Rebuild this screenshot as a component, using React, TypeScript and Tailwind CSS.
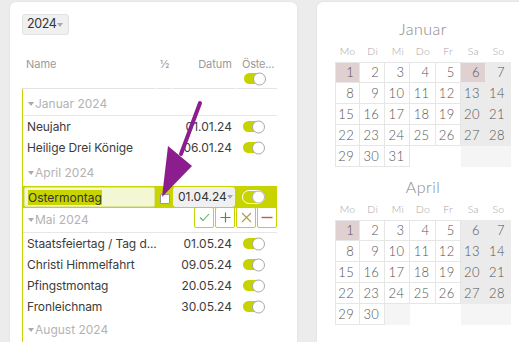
import React from 'react';

type Holiday = { name: string; date: string };

const january: Holiday[] = [
  { name: 'Neujahr', date: '01.01.24' },
  { name: 'Heilige Drei Könige', date: '06.01.24' },
];

const may: Holiday[] = [
  { name: 'Staatsfeiertag / Tag d...', date: '01.05.24' },
  { name: 'Christi Himmelfahrt', date: '09.05.24' },
  { name: 'Pfingstmontag', date: '20.05.24' },
  { name: 'Fronleichnam', date: '30.05.24' },
];

function Caret({ className = '' }: { className?: string }) {
  return (
    <span
      className={`inline-block h-0 w-0 border-x-[3.5px] border-t-[4px] border-x-transparent border-t-[#aaaaaa] ${className}`}
    />
  );
}

function Toggle() {
  return (
    <div className="relative h-[11px] w-[21px] rounded-full bg-[#c6d300]">
      <div className="absolute -right-px top-1/2 h-[13px] w-[13px] -translate-y-1/2 rounded-full border-[1.5px] border-[#a8a8a8] bg-white" />
    </div>
  );
}

function GroupRow({ label, className }: { label: string; className: string }) {
  return (
    <div className={`flex items-end pl-[5px] text-[12px] leading-[16px] text-[#b3b3b3] ${className}`}>
      <Caret className="mb-[6px] mr-[1px]" />
      <span>{label}</span>
    </div>
  );
}

function Row({ item }: { item: Holiday }) {
  return (
    <div className="grid h-[21px] grid-cols-[134px_15px_65px_40px] items-center text-[12px] text-[#3c3c3c]">
      <div className="whitespace-nowrap pl-[4px] tracking-[-0.1px]">{item.name}</div>
      <div />
      <div className="pr-[5px] text-right">{item.date}</div>
      <div className="pl-[6px]">
        <Toggle />
      </div>
    </div>
  );
}

function EditRow() {
  return (
    <div className="relative h-[22px] bg-[#c8d400]">
      <div className="grid h-full grid-cols-[134px_15px_65px_40px] items-center">
        <div className="pl-[1px]">
          <div className="flex h-[20px] w-[131px] items-center rounded-[2px] border border-[#dfe69a] bg-[#f4f7d3] pl-[3px] text-[12px] text-[#333333]">
            <span className="bg-[#c8d400] leading-[15px]">Ostermontag</span>
          </div>
        </div>
        <div className="flex justify-center pl-[1px] pt-[3px]">
          <div className="h-[10px] w-[10px] rounded-[1px] border border-[#999999] bg-white" />
        </div>
        <div className="pl-[1px]">
          <div className="flex h-[20px] w-[62px] items-center justify-between rounded-[3px] bg-[#f0f0f0] pl-[5px] pr-[4px] text-[12px] text-[#333333]">
            <span>01.04.24</span>
            <Caret />
          </div>
        </div>
        <div className="pl-[5px]">
          <div className="relative h-[14px] w-[23px] rounded-full border-[1.5px] border-white bg-[#c8d400]">
            <div className="absolute -right-[1px] top-1/2 h-[13px] w-[13px] -translate-y-1/2 rounded-full border border-[#b5b5b5] bg-white" />
          </div>
        </div>
      </div>
      <div className="absolute right-0 top-full z-10 -mt-px flex gap-px">
        <button className="flex h-[21px] w-[20px] items-center justify-center rounded-[2px] border border-[#c6d300] bg-white">
          <svg width="11" height="9" viewBox="0 0 11 9" fill="none">
            <path d="M1 4.5 L4 7.5 L10 1" stroke="#5bb55b" strokeWidth="1.1" />
          </svg>
        </button>
        <button className="flex h-[21px] w-[20px] items-center justify-center rounded-[2px] border border-[#c6d300] bg-white">
          <svg width="11" height="11" viewBox="0 0 11 11" fill="none">
            <path d="M5.5 0.5 V10.5 M0.5 5.5 H10.5" stroke="#3f9a3f" strokeWidth="1.2" />
          </svg>
        </button>
        <button className="flex h-[21px] w-[20px] items-center justify-center rounded-[2px] border border-[#c6d300] bg-white">
          <svg width="11" height="11" viewBox="0 0 11 11" fill="none">
            <path d="M1 1 L10 10 M10 1 L1 10" stroke="#a99d45" strokeWidth="1.1" />
          </svg>
        </button>
        <button className="flex h-[21px] w-[20px] items-center justify-center rounded-[2px] border border-[#c6d300] bg-white">
          <svg width="12" height="3" viewBox="0 0 12 3" fill="none">
            <path d="M0.5 1.5 H11.5" stroke="#c25a5a" strokeWidth="1.4" />
          </svg>
        </button>
      </div>
    </div>
  );
}

const weekdays = ['Mo', 'Di', 'Mi', 'Do', 'Fr', 'Sa', 'So'];

function Month({
  name,
  days,
  holidays,
  blanks,
  className = '',
}: {
  name: string;
  days: number;
  holidays: number[];
  blanks: boolean[];
  className?: string;
}) {
  const cells = [];
  for (let i = 0; i < 35; i++) {
    const col = i % 7;
    const row = Math.floor(i / 7);
    const day = i + 1;
    const weekend = col >= 5;
    if (day > days) {
      cells.push(
        <div key={i} className={`h-[21px] ${blanks[i - days] ? 'bg-[#f5f5f5]' : 'bg-white'}`} />
      );
      continue;
    }
    const hol = holidays.includes(day);
    let cls = 'flex h-[21px] items-center justify-end border-b border-r pr-[5px]';
    if (col === 0) cls += ' border-l';
    if (row === 0) cls += ' border-t';
    cls += hol ? ' bg-[#e1d0d1]' : weekend ? ' bg-[#ebebeb]' : ' bg-white';
    cls += weekend ? ' border-[#ebebeb]' : ' border-[#e6e6e6]';
    cells.push(
      <div key={i} className={cls}>
        {day}
      </div>
    );
  }
  return (
    <div className={`w-[176px] ${className}`} style={{ fontFamily: 'Lato, Inter, sans-serif' }}>
      <div className="h-[20px] text-center text-[16px] font-light leading-[20px] tracking-[0.5px] text-[#8a8a8a]">
        {name}
      </div>
      <div className="mt-[5px] grid h-[14px] grid-cols-7 text-center text-[10.5px] font-light leading-[14px] tracking-[0.3px] text-[#a5a5a5]">
        {weekdays.map((d) => (
          <div key={d}>{d}</div>
        ))}
      </div>
      <div className="mt-[4px] grid grid-cols-7 text-[13px] font-light leading-none tracking-[0.4px] text-[#555555]">
        {cells}
      </div>
    </div>
  );
}

export default function App() {
  return (
    <div
      className="relative flex h-[342px] w-[519px] gap-[20px] overflow-hidden bg-[#ececec] pl-[10px] pt-[2px]"
      style={{ fontFamily: 'Inter, "Noto Sans", sans-serif' }}
    >
      {/* Feiertage list */}
      <div className="h-[400px] w-[287px] shrink-0 rounded-[6px] bg-white px-[12px] pt-[12px] shadow-[0_0_2px_rgba(0,0,0,0.08)]">
        <div className="flex h-[21px] w-[47px] items-center justify-between rounded-[3px] border border-[#e2e2e2] bg-[#f0f0f0] pl-[4px] pr-[5px] text-[12.5px] text-[#333333]">
          <span className="tracking-[-0.4px]">2024</span>
          <Caret />
        </div>

        <div className="mt-[4px] w-[255px]">
          <div className="grid h-[50px] grid-cols-[134px_14px_64px_40px] gap-x-px text-[11px] leading-[14px] text-[#9a9a9a]">
            <div className="border-b border-[#e3e3e3] pl-[4px] pt-[18px]">Name</div>
            <div className="border-b border-[#e3e3e3] pl-[3px] pt-[18px]">½</div>
            <div className="border-b border-[#e3e3e3] pr-[4px] pt-[18px] text-right">Datum</div>
            <div className="border-b border-[#e3e3e3] pl-[5px] pt-[18px]">
              <div className="tracking-[-0.2px]">Öste...</div>
              <div className="mt-[2px] pl-[2px]">
                <Toggle />
              </div>
            </div>
          </div>

          <div className="border-l border-[#c6d300]">
            <GroupRow label="Januar 2024" className="h-[27px] border-b border-[#e6e6e6] pb-[3px]" />
            {january.map((h) => (
              <Row key={h.name} item={h} />
            ))}
            <GroupRow label="April 2024" className="h-[28px] pb-[5px]" />
            <EditRow />
            <GroupRow label="Mai 2024" className="h-[25px] border-b border-[#e6e6e6] pb-[4px]" />
            {may.map((h) => (
              <Row key={h.name} item={h} />
            ))}
            <GroupRow label="August 2024" className="h-[26px] border-b border-[#e6e6e6] pb-[4px]" />
            <div className="h-[60px]" />
          </div>
        </div>
      </div>

      {/* Calendar */}
      <div className="h-[400px] w-[220px] shrink-0 rounded-[6px] bg-white pl-[18px] pt-[17px] shadow-[0_0_2px_rgba(0,0,0,0.08)]">
        <Month name="Januar" days={31} holidays={[1, 6]} blanks={[false, false, true, true]} />
        <Month
          name="April"
          days={30}
          holidays={[1]}
          blanks={[true, false, false, true, true]}
          className="mt-[10px]"
        />
      </div>

      {/* annotation arrow */}
      <svg className="pointer-events-none absolute left-0 top-0" width="519" height="342">
        <line x1="200" y1="103" x2="181" y2="154" stroke="#8b1d8f" strokeWidth="4" strokeLinecap="round" />
        <polygon points="168,146 192,166 162,197" fill="#8b1d8f" />
      </svg>
    </div>
  );
}
